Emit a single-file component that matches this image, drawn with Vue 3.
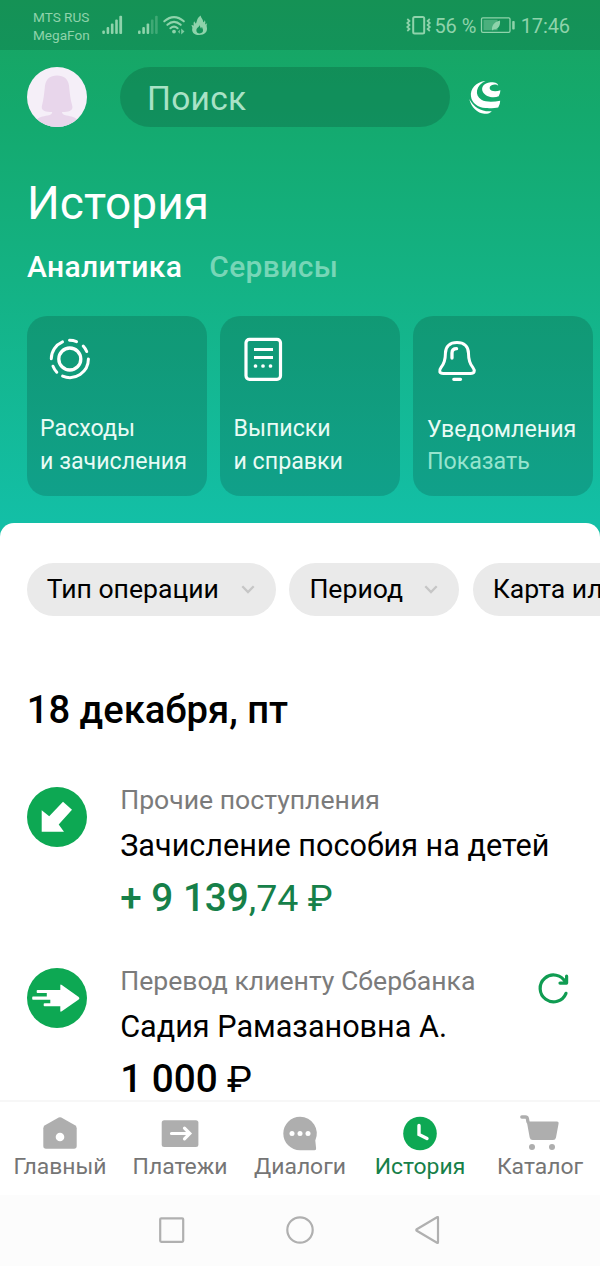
<script setup>
const cards = [
  { icon: 'ring', top: 'Расходы', bottom: 'и зачисления' },
  { icon: 'doc', top: 'Выписки', bottom: 'и справки' },
  { icon: 'bell', top: 'Уведомления', bottom: 'Показать', muted: true }
]
const chips = [
  { label: 'Тип операции', cls: 'chip-type' },
  { label: 'Период', cls: 'chip-period' },
  { label: 'Карта или счёт', cls: 'chip-card' }
]
const operations = [
  { kind: 'in', category: 'Прочие поступления', title: 'Зачисление пособия на детей', whole: '+ 9 139', rest: ',74 ₽' },
  { kind: 'out', category: 'Перевод клиенту Сбербанка', title: 'Садия Рамазановна А.', whole: '1 000', rest: ' ₽', repeat: true }
]
const tabs = [
  { icon: 'home', label: 'Главный' },
  { icon: 'pay', label: 'Платежи' },
  { icon: 'chat', label: 'Диалоги' },
  { icon: 'clock', label: 'История', active: true },
  { icon: 'cart', label: 'Каталог' }
]
</script>

<template>
  <div class="screen">
    <header class="hero">
      <div class="status">
        <div class="carriers"><span class="c1">MTS RUS</span><span class="c2">MegaFon</span></div>
        <svg class="signals" width="110" height="24" viewBox="100 14 110 24" fill="currentColor">
          <rect x="102.3" y="30.5" width="2.6" height="3.5" rx="1" />
          <rect x="106.6" y="27" width="2.6" height="7" rx="1" />
          <rect x="110.9" y="23.5" width="2.6" height="10.5" rx="1" />
          <rect x="115.2" y="19.5" width="2.6" height="14.5" rx="1" />
          <rect x="119.3" y="15.8" width="2.8" height="18.2" rx="1" />
          <rect x="138" y="30.5" width="2.6" height="3.5" rx="1" />
          <rect x="142.3" y="27" width="2.6" height="7" rx="1" />
          <rect x="146.6" y="23.5" width="2.6" height="10.5" rx="1" />
          <rect x="150.9" y="19.5" width="2.6" height="14.5" rx="1" opacity=".35" />
          <rect x="155.1" y="15.8" width="2.6" height="18.2" rx="1" opacity=".35" />
          <g fill="none" stroke="currentColor" stroke-width="2.1" stroke-linecap="round">
            <path d="M164.3 21.3Q174 13 183.8 21.3" />
            <path d="M167.4 24.8Q174 19 180.7 24.8" />
            <path d="M170.4 28.2Q174 25 177.6 28.2" />
          </g>
          <circle cx="174" cy="31.6" r="1.9" />
          <path d="M181.2 28.6l3.3 2.9-3.3 2.9zM179.8 29.6v4.2l-1.8-2.1z" opacity=".85" />
          <path fill-rule="evenodd" d="M200.8 15.6c-.3 2.400 2.600 3.600 2.400 6.600 1-.3 1.500-1.200 1.300-2.300 1.300 1.500.9 3.300.5 4.700l2.200-1.300c-.6 1.200-.7 2.300-.4 3.700 1.200 4.800-2.300 8-7.700 8-5.500 0-7.800-3.300-6.700-7.300l-1-2.700 2.600.6c-.7-1.400-.5-2.500.1-4.300l1.800 2.400c1.500-2.600.7-5.600 4.900-8.100zM199.800 24.600c.3 2.200-3.400 3-3.400 5.800 0 1.900 1.400 3 3.300 3 2.100 0 3.500-1.200 3.300-3.300-.1-1.300-.9-2-.9-3-.7.4-.9.9-.9 1.700-.8-.8-1.300-2.600-1.400-4.200z" />
        </svg>
        <span class="grow"></span>
        <svg class="vibe" width="24" height="22" viewBox="406 14 24 22" fill="none" stroke="currentColor">
          <rect x="413.200" y="17" width="11" height="16.500" rx="1.500" stroke-width="2" />
          <path d="M407.300 19l2.200 2-2.200 2 2.200 2-2.200 2 2.200 2-2.200 2M429.800 19l-2.200 2 2.200 2-2.200 2 2.200 2-2.200 2 2.200 2" stroke-width="1.700" />
        </svg>
        <span class="pct">56 %</span>
        <svg class="battery" width="36" height="18" viewBox="480 16 36 18">
          <rect x="481.500" y="17.800" width="28.500" height="14.500" rx="1.300" fill="none" stroke="currentColor" stroke-width="1.300" />
          <rect x="483.500" y="19.800" width="14" height="10.500" fill="currentColor" opacity=".45" />
          <path d="M500 20.500c.6 5-1.800 9-6 8.800l-1.800 1.200c-1-4 1.500-8.600 7.800-10z" fill="currentColor" />
          <rect x="512.200" y="21" width="2.500" height="8.500" rx=".8" fill="currentColor" />
        </svg>
        <span class="time">17:46</span>
      </div>

      <div class="topbar">
        <svg class="avatar" width="60" height="60" viewBox="0 0 60 60">
          <defs><clipPath id="avatar-clip"><circle cx="30" cy="30" r="30" /></clipPath></defs>
          <g clip-path="url(#avatar-clip)">
            <rect width="60" height="60" fill="#f5eff8" />
            <path d="M30 8.500c-7 0-11 3.500-12 10-.8 8-1.400 14-3 20-1.300 4.800 2.700 6.500 10.200 6.500 0 2-1.500 3-4.500 3.500C15.500 49.500 12 50 9 53v9h42v-9c-3-3-6.500-3.500-11.500-4.500-3-.5-4.500-1.500-4.500-3.500 7.500 0 11.500-1.700 10.200-6.500-1.800-6-2.400-12-3.200-20-1-6.500-5-10-12-10z" fill="#e8d6eb" />
          </g>
        </svg>
        <div class="search">Поиск</div>
        <svg class="bonus" width="34" height="36" viewBox="468 78 34 36" fill="#fff">
          <path d="M485.500 80C476 80.800 469.800 88 471 95.500c.9 6.800 7 11 14.500 11.500 5.200.4 10.200-.2 12.700-.6q2-3.500 2-6.700c-7 1.300-14.500 1.500-18.700-1-7.500-4.500-5.500-14.500 4-18.700z" />
          <path d="M490.500 81.300c-7 .5-10 5.400-7.500 9.900 2.500 4.500 10.500 6.300 15.700 4q1.700-3 1.700-6c-3.900 1.600-9.400 1.500-10.500-1.200-.8-2.300 1-4.300 4.600-4.500 1.800 0 3 .5 3.700 1.300 0-2-2.200-3.600-7.700-3.500z" />
          <path d="M469.300 98c1.800 8.200 8.200 14.200 15 14.800 3.500.1 6.300-1 7.500-2.600-9 1.100-18-3.200-22.500-12.200z" />
        </svg>
      </div>

      <h1>История</h1>
      <div class="sections"><span class="on">Аналитика</span><span class="off">Сервисы</span></div>

      <div class="cards">
        <div v-for="c in cards" :key="c.icon" class="card">
          <svg class="card-icon" width="50" height="50" viewBox="0 0 50 50" fill="none" stroke="#fff" stroke-linecap="round" stroke-linejoin="round">
            <g v-if="c.icon === 'ring'" stroke-width="3">
              <circle cx="29.800" cy="30" r="11" stroke-width="3.300" />
              <path d="M11.300 29.800A18.600 18.600 0 0 1 22.500 12.900M29.500 11.300A18.600 18.600 0 0 1 36.500 12.600M43.200 17A18.600 18.600 0 0 1 46.700 22.500M48.400 30A18.600 18.600 0 0 1 22.600 47.100M16.800 43.200A18.600 18.600 0 0 1 13 37.200" />
            </g>
            <g v-else-if="c.icon === 'doc'">
              <rect x="13" y="10.300" width="34.500" height="40" rx="3.500" stroke-width="3.200" />
              <path d="M21 20.500h19M21 28.500h19" stroke-width="3" stroke-linecap="butt" />
              <path d="M22.500 37h.01M30 37h.01M37.500 37h.01" stroke-width="3.700" />
            </g>
            <g v-else stroke-width="3">
              <path d="M30 13.400c7 0 11.500 4 11.500 11 0 6.500 1 9.800 4.300 14 2.500 3.300 1.800 6-2.300 6H16.400c-4.100 0-4.800-2.700-2.300-6 3.300-4.200 4.300-7.500 4.300-14 0-7 4.600-11 11.600-11z" />
              <path d="M25 29v-5q0-4.300 4.600-4.300M26.800 50.300h6.700" stroke-width="3.300" />
            </g>
          </svg>
          <div class="card-text" :class="{ tight: c.muted }"><span>{{ c.top }}</span><span :class="{ muted: c.muted }">{{ c.bottom }}</span></div>
        </div>
      </div>
    </header>

    <main class="sheet">
      <div class="chips">
        <div v-for="c in chips" :key="c.label" class="chip" :class="c.cls">
          <span>{{ c.label }}</span>
          <svg width="14" height="10" viewBox="0 0 14 10" fill="none" stroke="#c6c6c6" stroke-width="2.300"><path d="M1.300 2.200L7 8l5.700-5.800" /></svg>
        </div>
      </div>
      <h2>18 декабря, пт</h2>
      <article v-for="o in operations" :key="o.title" class="op" :class="o.kind">
        <svg class="op-icon" width="60" height="60" viewBox="0 0 60 60">
          <circle cx="30" cy="30" r="30" fill="#0da853" />
          <path v-if="o.kind === 'in'" d="M36 14.700L45 22.800 31.700 37.500l5.300 7.300H14.700V23.300l7.500 5.900z" fill="#fff" />
          <path v-else d="M10.500 21.900H33.300V17.500q0-1.500 1.500-.5L51.700 29q1.500 1.200 0 2.400L34.800 43.300q-1.500 1-1.500-.5V38.300H17.500q-.8 0-.8-.8v-1.400q0-.8.8-.8H23.300V31.700H6q-.8 0-.8-.8V29.400q0-.8.8-.8H19.800V25H10.500q-.8 0-.8-.8V22.700q0-.8.8-.8z" fill="#fff" />
        </svg>
        <div class="op-text">
          <span class="category">{{ o.category }}</span>
          <span class="title">{{ o.title }}</span>
          <span class="amount"><b>{{ o.whole }}</b>{{ o.rest }}</span>
        </div>
        <svg v-if="o.repeat" class="repeat" width="34" height="34" viewBox="536 971 34 34" fill="none" stroke="#109c52" stroke-width="3.200" stroke-linecap="round" stroke-linejoin="round">
          <path d="M566 993.300A13.400 13.400 0 1 1 565.500 982.300" /><path d="M566.600 976.200v6.900H560" />
        </svg>
      </article>
    </main>

    <nav class="tabs">
      <div v-for="t in tabs" :key="t.icon" class="tab" :class="{ active: t.active }">
        <svg width="44" height="36" viewBox="0 0 44 36" fill="#aeaeae">
          <g v-if="t.icon === 'home'">
            <path d="M20.700 1.500q1.300-.7 2.600 0l13.700 7.700q1.700 1 1.700 3V30q0 2.700-2.700 2.700H8Q5.300 32.700 5.300 30V12.200q0-2 1.700-3z" /><circle cx="22" cy="21" r="4.300" fill="#fff" />
          </g>
          <g v-else-if="t.icon === 'pay'">
            <rect x="3.700" y="4.300" width="36.700" height="26.700" rx="2.500" /><path d="M13.500 17.500h18M26.500 12.200l5.300 5.300-5.300 5.300" fill="none" stroke="#fff" stroke-width="3.200" stroke-linecap="round" />
          </g>
          <g v-else-if="t.icon === 'chat'">
            <path d="M22 .8a16.700 16.700 0 1 0 0 33.400h14.500q2 0 1.600-2l-.8-7.700A16.700 16.700 0 0 0 22 .8z" /><g fill="#fff"><circle cx="14" cy="17.500" r="2.500" /><circle cx="22" cy="17.500" r="2.500" /><circle cx="30" cy="17.500" r="2.500" /></g>
          </g>
          <g v-else-if="t.icon === 'clock'">
            <circle cx="22" cy="17.500" r="16.800" fill="#0da853" /><path d="M21 9.500V18.500l8 4" fill="none" stroke="#fff" stroke-width="3.400" stroke-linecap="round" />
          </g>
          <g v-else>
            <path d="M3.800 1H7.500q1.500 0 1.900 1.600L10 6" fill="none" stroke="#aeaeae" stroke-width="3.300" stroke-linecap="round" />
            <path d="M9.500 5.600H39q2 0 1.600 2L38 21.500q-.5 2.500-3 2.500H14.700q-2.500 0-3-2.500L8.500 4z" /><circle cx="14" cy="31" r="3" /><circle cx="34" cy="31" r="3" />
          </g>
        </svg>
        <span>{{ t.label }}</span>
      </div>
    </nav>
    <footer class="system">
      <svg width="28" height="28" viewBox="0 0 28 28"><rect x="2.200" y="2.300" width="23" height="23.500" rx="1" /></svg>
      <svg width="28" height="28" viewBox="0 0 28 28"><circle cx="14" cy="14" r="12.700" /></svg>
      <svg width="28" height="28" viewBox="0 0 28 28"><path d="M24 1.700V26.300q0 1-1 .5L2.800 14.800q-1-.8 0-1.600L23 1.200q1-.5 1 .5z" /></svg>
    </footer>
  </div>
</template>

<style>
body { margin: 0; background: #fff; }
</style>

<style scoped>
.screen { width: 600px; height: 1266px; overflow: hidden; font-family: Roboto, "Liberation Sans", sans-serif; color: #000; background: #fff; display: flex; flex-direction: column; }
.screen * { box-sizing: border-box; }
.screen span { white-space: nowrap; }
svg { display: block; flex: none; overflow: visible; }
.hero { flex: none; height: 541px; background: linear-gradient(180deg, #18a460 0, #14a96d 110px, #14b284 280px, #13bfa6 522px); }
.status { height: 50px; background: rgba(0, 0, 0, .11); color: #8fd3ab; display: flex; align-items: center; padding: 0 30px 0 33px; }
.carriers { width: 67px; display: flex; flex-direction: column; font-size: 13.600px; line-height: 18px; padding-top: 1px; }
.signals { margin-top: 2px; }
.grow { flex: 1; }
.pct, .time { font-size: 20px; line-height: 24px; padding-top: 2px; letter-spacing: -.1px; }
.vibe { margin-right: 4px; }
.battery { margin: 0 4.500px 0 4px; }
.topbar { display: flex; align-items: center; padding: 17px 0 0 26.700px; }
.search { margin-left: 33.300px; width: 330px; height: 60px; border-radius: 30px; background: rgba(0, 0, 0, .15); color: #a9e2c6; font-size: 33.500px; line-height: 63px; padding-left: 27px; letter-spacing: .3px; }
.bonus { margin-left: 18px; }
h1 { margin: 46px 0 0 27px; font-size: 46px; line-height: 60px; font-weight: 400; color: #fff; }
.sections { margin: 14px 0 0 27px; height: 40px; display: flex; gap: 27px; font-size: 30px; line-height: 40px; font-weight: 500; letter-spacing: .35px; }
.on { color: #fff; }
.off { color: #77d6b7; }
.cards { display: flex; gap: 13.400px; padding: 29px 0 0 26.600px; }
.card { flex: none; width: 180px; height: 180px; border-radius: 20px; background: rgba(0, 0, 0, .15); padding: 13px 13.500px; display: flex; flex-direction: column; justify-content: space-between; }
.card-icon { margin-left: -.300px; }
.card-text { display: flex; flex-direction: column; font-size: 23.200px; line-height: 33px; color: #e9fbf5; padding-bottom: 5px; }
.card-text.tight { line-height: 31.500px; padding-bottom: 6px; }
.card-text .muted { color: #96e4ce; }
.sheet { position: relative; flex: none; height: 578px; margin-top: -18.500px; border-radius: 14px 14px 0 0; background: #fff; overflow: hidden; padding: 40px 0 0 26.700px; }
.chips { display: flex; gap: 13.400px; }
.chip { flex: none; height: 53px; border-radius: 27px; background: #eaeaea; display: flex; align-items: center; justify-content: space-between; padding: 0 21px 0 20px; font-size: 26.600px; line-height: 51px; }
.chip span { padding-bottom: 2px; }
.chip-type { width: 249.300px; }
.chip-period { width: 170px; }
.chip-card { width: 280px; }
h2 { margin: 69px 0 0; font-size: 38.200px; line-height: 50px; font-weight: 500; }
.op { display: flex; align-items: flex-start; height: 181.300px; }
.op:first-of-type { margin-top: 52px; }
.op-icon { margin-right: 33.500px; }
.op-text { display: flex; flex-direction: column; }
.category { font-size: 26.600px; line-height: 32px; color: #7b7b7b; margin-top: -2.800px; }
.title { font-size: 30.600px; line-height: 40px; margin-top: 10.300px; }
.amount { font-size: 37.600px; line-height: 50px; margin-top: 6.500px; white-space: pre; }
.amount b { font-weight: 500; font-size: 38.700px; }
.in .amount { color: #168049; }
.repeat { margin-left: auto; margin-right: 30.500px; margin-top: 3px; }
.tabs { flex: none; position: relative; z-index: 1; margin-top: -1px; height: 95.500px; background: #fff; border-top: 2px solid #f7f7f7; display: flex; }
.tab { width: 120px; padding-top: 14px; display: flex; flex-direction: column; align-items: center; font-size: 22.900px; line-height: 30px; color: #757575; }
.active { color: #168049; }
.system { flex: 1; background: #fcfcfc; display: flex; justify-content: center; gap: 100px; padding-top: 20.500px; }
.system svg { fill: none; stroke: #b0b0b0; stroke-width: 2.200; }
</style>
